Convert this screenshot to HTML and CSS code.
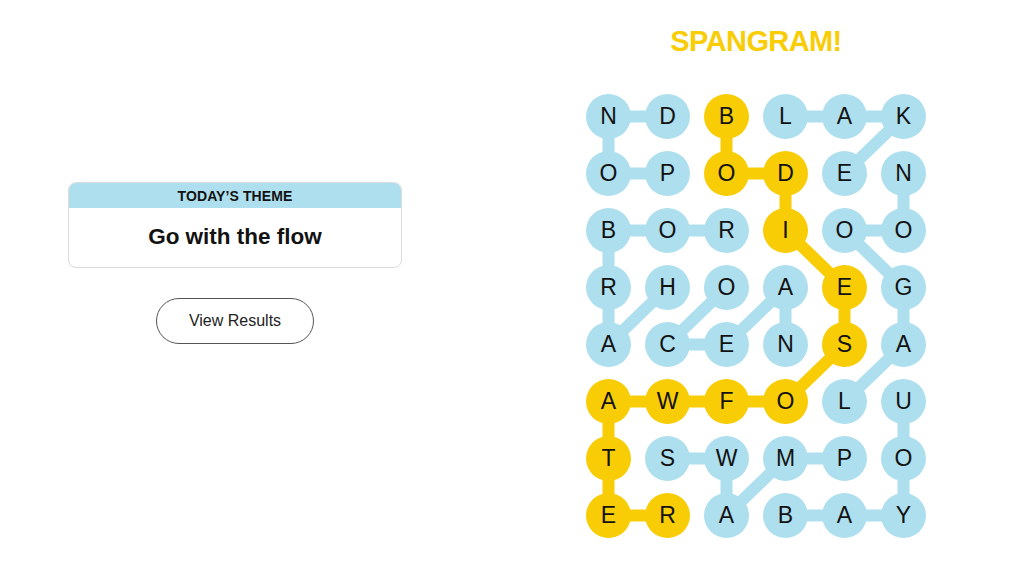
FILE: index.html
```html
<!DOCTYPE html>
<html lang="en">
<head>
<meta charset="utf-8">
<title>Strands</title>
<link rel="stylesheet" href="styles.css">
</head>
<body>
<main class="page">
  <section class="left">
    <div class="theme-card">
      <div class="theme-head">TODAY’S THEME</div>
      <div class="theme-body">Go with the flow</div>
    </div>
    <button class="results-btn" type="button">View Results</button>
  </section>
  <section class="right">
    <h1 class="spangram">SPANGRAM!</h1>
    <div class="board">
      <svg class="links" width="340" height="444" viewBox="0 0 340 444" aria-hidden="true">
        <g class="blue">
          <polyline points="81.5,79.5 22.5,79.5 22.5,22.5 81.5,22.5"/>
          <polyline points="199.5,22.5 258.5,22.5 317.5,22.5 258.5,79.5"/>
          <polyline points="81.5,193.5 22.5,250.5 22.5,193.5 22.5,136.5 81.5,136.5 140.5,136.5"/>
          <polyline points="140.5,193.5 81.5,250.5 140.5,250.5 199.5,193.5 199.5,250.5"/>
          <polyline points="258.5,307.5 317.5,250.5 317.5,193.5 258.5,136.5 317.5,136.5 317.5,79.5"/>
          <polyline points="81.5,364.5 140.5,364.5 140.5,421.5 199.5,364.5 258.5,364.5"/>
          <polyline points="199.5,421.5 258.5,421.5 317.5,421.5 317.5,364.5 317.5,307.5"/>
        </g>
        <g class="gold">
          <polyline points="140.5,22.5 140.5,79.5 199.5,79.5 199.5,136.5 258.5,193.5 258.5,250.5 199.5,307.5 140.5,307.5 81.5,307.5 22.5,307.5 22.5,364.5 22.5,421.5 81.5,421.5"/>
        </g>
      </svg>
      <span class="cell">N</span><span class="cell">D</span><span class="cell span">B</span><span class="cell">L</span><span class="cell">A</span><span class="cell">K</span>
      <span class="cell">O</span><span class="cell">P</span><span class="cell span">O</span><span class="cell span">D</span><span class="cell">E</span><span class="cell">N</span>
      <span class="cell">B</span><span class="cell">O</span><span class="cell">R</span><span class="cell span">I</span><span class="cell">O</span><span class="cell">O</span>
      <span class="cell">R</span><span class="cell">H</span><span class="cell">O</span><span class="cell">A</span><span class="cell span">E</span><span class="cell">G</span>
      <span class="cell">A</span><span class="cell">C</span><span class="cell">E</span><span class="cell">N</span><span class="cell span">S</span><span class="cell">A</span>
      <span class="cell span">A</span><span class="cell span">W</span><span class="cell span">F</span><span class="cell span">O</span><span class="cell">L</span><span class="cell">U</span>
      <span class="cell span">T</span><span class="cell">S</span><span class="cell">W</span><span class="cell">M</span><span class="cell">P</span><span class="cell">O</span>
      <span class="cell span">E</span><span class="cell span">R</span><span class="cell">A</span><span class="cell">B</span><span class="cell">A</span><span class="cell">Y</span>
    </div>
  </section>
</main>
</body>
</html>
```
FILE: styles.css
```css
* { box-sizing: border-box; }
html, body {
  margin: 0;
  padding: 0;
  background: #ffffff;
  color: #121212;
  font-family: "Liberation Sans", Arial, sans-serif;
}
.page {
  display: flex;
  width: 1024px;
  height: 576px;
}
.left {
  width: 470px;
  padding-top: 182px;
  display: flex;
  flex-direction: column;
  align-items: center;
}
.theme-card {
  width: 334px;
  border: 1px solid #dcdcdc;
  border-radius: 8px;
  overflow: hidden;
}
.theme-head {
  height: 25px;
  background: #aedfee;
  display: flex;
  align-items: center;
  justify-content: center;
  font-size: 14px;
  font-weight: 700;
  letter-spacing: 0.1px;
  color: #121212;
}
.theme-body {
  height: 59px;
  display: flex;
  align-items: center;
  justify-content: center;
  font-size: 22.5px;
  font-weight: 700;
  color: #121212;
  padding-bottom: 1px;
}
.results-btn {
  margin-top: 30px;
  width: 158px;
  height: 46px;
  border: 1px solid #555555;
  border-radius: 23px;
  background: #ffffff;
  font-family: "Liberation Sans", Arial, sans-serif;
  font-size: 16px;
  color: #222222;
  padding: 0;
}
.right {
  margin-left: 116px;
  width: 340px;
  display: flex;
  flex-direction: column;
  align-items: center;
}
.spangram {
  margin: 0;
  padding-top: 23px;
  height: 59px;
  line-height: 36px;
  font-size: 29px;
  font-weight: 700;
  letter-spacing: -0.6px;
  color: #f8cd05;
}
.board {
  position: relative;
  margin-top: 35px;
  display: grid;
  grid-template-columns: repeat(6, 45px);
  grid-auto-rows: 45px;
  column-gap: 14px;
  row-gap: 12px;
}
.links {
  position: absolute;
  left: 0;
  top: 0;
  z-index: 0;
}
.links polyline {
  fill: none;
  stroke-width: 12;
  stroke-linejoin: round;
  stroke-linecap: round;
}
.links .blue polyline { stroke: #aedfee; }
.links .gold polyline { stroke: #f8cd05; }
.cell {
  position: relative;
  z-index: 1;
  width: 45px;
  height: 45px;
  border-radius: 50%;
  background: #aedfee;
  display: flex;
  align-items: center;
  justify-content: center;
  font-size: 23px;
  color: #121212;
  line-height: 1;
}
.cell.span { background: #f8cd05; }
```
